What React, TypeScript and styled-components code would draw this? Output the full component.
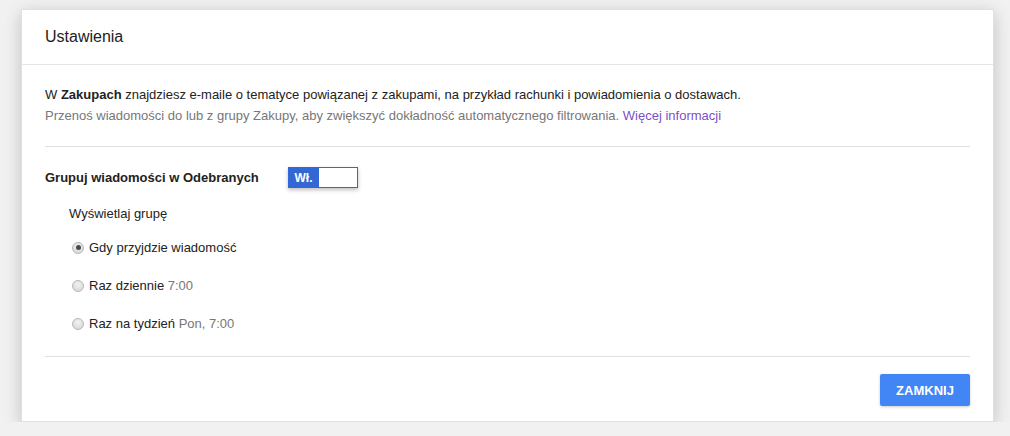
import React from 'react';
import styled, { createGlobalStyle } from 'styled-components';

const GlobalStyle = createGlobalStyle`
  html, body {
    margin: 0;
    padding: 0;
    background: #f1f1f1;
    font-family: Arial, "Liberation Sans", sans-serif;
    font-size: 13px;
    color: #222;
  }
`;

const Page = styled.div`
  padding: 9px 0 0 21px;
`;

const Dialog = styled.div`
  width: 973px;
  height: 413px;
  background: #fff;
  box-shadow: 0 4px 16px rgba(0, 0, 0, 0.2);
  border: 1px solid rgba(0, 0, 0, 0.12);
  box-sizing: border-box;
  display: flex;
  flex-direction: column;
`;

const Header = styled.div`
  height: 55px;
  display: flex;
  align-items: center;
  padding: 0 23px;
  font-size: 16px;
  color: #222;
  border-bottom: 1px solid #e5e5e5;
  box-sizing: border-box;
`;

const Body = styled.div`
  padding: 19px 23px 0;
  flex: 1;
  display: flex;
  flex-direction: column;
`;

const Intro = styled.p`
  margin: 0;
  line-height: 21px;
`;

const Muted = styled.span`
  color: #777;
`;

const Link = styled.a`
  color: #7b50c8;
  text-decoration: none;
  cursor: pointer;
`;

const Divider = styled.hr<{ $top: number }>`
  border: 0;
  border-top: 1px solid #e0e0e0;
  margin: ${(p) => p.$top}px 0 0;
`;

const ToggleRow = styled.div`
  display: flex;
  align-items: center;
  margin-top: 20px;
  height: 21px;
`;

const ToggleLabel = styled.span`
  font-weight: bold;
  width: 243px;
`;

const Toggle = styled.div`
  display: flex;
  width: 70px;
  height: 21px;
  box-shadow: 0 2px 4px rgba(0, 0, 0, 0.25);
`;

const ToggleOn = styled.span`
  width: 31px;
  background: #3367d6;
  color: #fff;
  font-weight: bold;
  font-size: 12px;
  display: flex;
  align-items: center;
  justify-content: center;
`;

const ToggleKnob = styled.span`
  flex: 1;
  background: #fff;
  border: 1px solid #3367d6;
  border-left: 0;
`;

const GroupTitle = styled.div`
  margin: 18px 0 0 24px;
  line-height: 15px;
`;

const RadioList = styled.div`
  display: flex;
  flex-direction: column;
  gap: 23px;
  margin: 19px 0 0 27px;
`;

const RadioRow = styled.label`
  display: flex;
  align-items: center;
  gap: 5px;
  line-height: 15px;
`;

const RadioDot = styled.span<{ $checked?: boolean }>`
  width: 10px;
  height: 10px;
  border-radius: 50%;
  border: 1px solid #b8b8b8;
  background: radial-gradient(circle at 50% 35%, #f2f2f2, #d2d2d2);
  position: relative;
  flex-shrink: 0;
  &::after {
    content: '';
    display: ${(p) => (p.$checked ? 'block' : 'none')};
    position: absolute;
    left: 2.5px;
    top: 2.5px;
    width: 5px;
    height: 5px;
    border-radius: 50%;
    background: #4a4a4a;
  }
`;

const Footer = styled.div`
  display: flex;
  justify-content: flex-end;
  margin-top: 17px;
`;

const Button = styled.button`
  width: 90px;
  height: 32px;
  border: 0;
  border-radius: 2px;
  background: #4285f4;
  color: #fff;
  font-family: Arial, "Liberation Sans", sans-serif;
  font-weight: bold;
  font-size: 13px;
  box-shadow: 0 1px 3px rgba(0, 0, 0, 0.2);
  cursor: pointer;
`;

const options = [
  { label: 'Gdy przyjdzie wiadomość', extra: '', checked: true },
  { label: 'Raz dziennie', extra: '7:00', checked: false },
  { label: 'Raz na tydzień', extra: 'Pon, 7:00', checked: false },
];

export default function App() {
  return (
    <Page>
      <GlobalStyle />
      <Dialog>
        <Header>Ustawienia</Header>
        <Body>
          <Intro>
            W <b>Zakupach</b> znajdziesz e-maile o tematyce powiązanej z zakupami, na przykład rachunki i
            powiadomienia o dostawach.
            <br />
            <Muted>
              Przenoś wiadomości do lub z grupy Zakupy, aby zwiększyć dokładność automatycznego filtrowania.
            </Muted>{' '}
            <Link>Więcej informacji</Link>
          </Intro>
          <Divider $top={20} />
          <ToggleRow>
            <ToggleLabel>Grupuj wiadomości w Odebranych</ToggleLabel>
            <Toggle>
              <ToggleOn>Wł.</ToggleOn>
              <ToggleKnob />
            </Toggle>
          </ToggleRow>
          <GroupTitle>Wyświetlaj grupę</GroupTitle>
          <RadioList>
            {options.map((o) => (
              <RadioRow key={o.label}>
                <RadioDot $checked={o.checked} />
                <span>
                  {o.label}
                  {o.extra && <Muted> {o.extra}</Muted>}
                </span>
              </RadioRow>
            ))}
          </RadioList>
          <Divider $top={25} />
          <Footer>
            <Button>ZAMKNIJ</Button>
          </Footer>
        </Body>
      </Dialog>
    </Page>
  );
}
